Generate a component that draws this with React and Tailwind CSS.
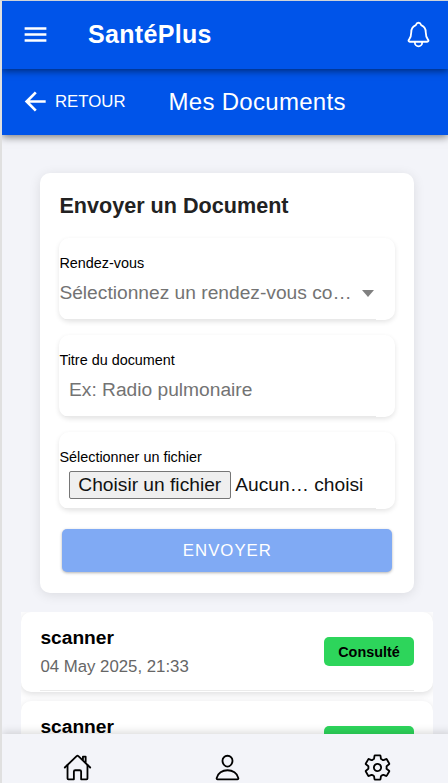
import React from "react";
import {
  IoMenuSharp,
  IoArrowBackSharp,
  IoNotificationsOutline,
  IoHomeOutline,
  IoPersonOutline,
  IoSettingsOutline,
} from "react-icons/io5";

const documents = [
  { id: 1, title: "scanner", date: "04 May 2025, 21:33", status: "Consulté" },
  { id: 2, title: "scanner", date: "04 May 2025, 21:33", status: "Consulté" },
];

function Field({ label, className, children }) {
  return (
    <div className={`rounded-[10px] bg-white shadow-[0_2px_5px_rgba(0,0,0,0.11)] ${className}`}>
      <div className="mr-[19px] flex h-full flex-col pt-[17px]">
        <label className="text-[14.4px] leading-[17px] text-black">{label}</label>
        {children}
        <div className="mt-auto ml-[6px] h-px bg-[#e9e9e9]" />
      </div>
    </div>
  );
}

function DocumentItem({ title, date, status }) {
  return (
    <li className="h-[80px] rounded-[10px] bg-white pl-[19.4px] shadow-[0_2px_6px_rgba(0,0,0,0.12)]">
      <div className="mr-[19px] flex h-[79px] items-start justify-between border-b border-[#ebebeb]">
        <div className="pt-[14.5px]">
          <h3 className="text-[19.2px] leading-[24px] font-bold text-black">{title}</h3>
          <p className="mt-[4.5px] text-[16.8px] leading-[24px] text-[#666]">{date}</p>
        </div>
        <span className="mt-[25.2px] flex h-[29px] w-[90px] items-center justify-center rounded-[5px] bg-[#2dd55b] pt-[2px] text-[14.4px] font-bold text-black">
          {status}
        </span>
      </div>
    </li>
  );
}

export default function App() {
  return (
    <div className="flex h-[783px] w-[448px] flex-col overflow-hidden border-t border-l-2 border-t-[#cfd3d8] border-l-[#e0e0e0] bg-[#f3f4f9] font-['Liberation_Sans',Arial,sans-serif]">
      <header className="relative z-20 flex h-[68px] shrink-0 items-center bg-[#0054e9] text-white shadow-[0_2px_7px_rgba(0,0,0,0.5)]">
        <IoMenuSharp className="mb-[2px] ml-[19px] size-[29px]" />
        <h1 className="ml-[38px] flex-1 text-[25px] font-bold tracking-[0.0125em]">SantéPlus</h1>
        <IoNotificationsOutline className="mr-[15px] mb-[2px] size-[29px]" />
      </header>
      <div className="relative z-10 flex h-[66px] shrink-0 items-center bg-[#0054e9] text-white shadow-[0_2px_8px_rgba(0,0,0,0.5)]">
        <IoArrowBackSharp className="mb-[1px] ml-[19px] size-[29px]" />
        <span className="ml-[5px] w-[71px] text-[16.8px]">RETOUR</span>
        <h2 className="ml-[42.5px] text-[24px] tracking-[0.0125em]">Mes Documents</h2>
      </div>

      <main className="min-h-0 flex-1 overflow-hidden pt-[38.4px] pr-[15px] pl-[19px]">
        <section className="mx-[19px] h-[419.6px] rounded-[10px] bg-white pt-[19.6px] pr-[19px] pl-[19.4px] shadow-[0_2px_12px_rgba(0,0,0,0.1)]">
          <h2 className="text-[21.6px] leading-[26px] font-bold text-[#222]">Envoyer un Document</h2>
          <Field label="Rendez-vous" className="mt-[19px] h-[82px]">
            <div className="mt-[9px] flex items-center text-[19.2px] leading-[24px] text-[#737373]">
              <span className="w-[294px] truncate">Sélectionnez un rendez-vous confirmé</span>
              <svg viewBox="0 0 12 7" className="mt-[1px] ml-[9px] h-[7px] w-[12px] shrink-0" fill="#808080">
                <path d="M0 0H12L6 7Z" />
              </svg>
            </div>
          </Field>
          <Field label="Titre du document" className="mt-[15px] h-[82px]">
            <input
              className="mt-[9px] h-[24px] w-full pl-[9.6px] text-[19.2px] text-black outline-none placeholder:text-[#737373]"
              placeholder="Ex: Radio pulmonaire"
            />
          </Field>
          <Field label="Sélectionner un fichier" className="mt-[15px] h-[77px]">
            <div className="mt-[5px] flex items-center pl-[9.4px] text-[19.2px] text-[#111]">
              <button className="h-[28px] w-[162px] rounded-[2px] border border-[#767676] bg-[#efefef] leading-[24px] whitespace-nowrap">
                Choisir un fichier
              </button>
              <span className="ml-[4.5px] leading-[24px] whitespace-nowrap">Aucun… choisi</span>
            </div>
          </Field>
          <button className="mx-[3px] mt-[20px] flex h-[43px] w-[330px] items-center justify-center rounded-[5px] bg-[#80aaf4] text-[16.8px] tracking-[0.06em] text-white shadow-[0_1px_3px_rgba(0,0,0,0.3)]">
            ENVOYER
          </button>
        </section>

        <ul className="mt-[19px] flex flex-col gap-[9px] overflow-hidden bg-[#fdfdfe]">
          {documents.map((doc) => (
            <DocumentItem key={doc.id} {...doc} />
          ))}
        </ul>
      </main>

      <nav className="relative z-10 grid h-[49px] w-[450px] shrink-0 grid-cols-3 justify-items-center bg-[#f3f4f9] pt-[19px] text-black shadow-[0_-2px_8px_rgba(0,0,0,0.15)]">
        <IoHomeOutline className="size-[29px]" />
        <IoPersonOutline className="size-[29px]" />
        <IoSettingsOutline className="size-[29px]" />
      </nav>
    </div>
  );
}
